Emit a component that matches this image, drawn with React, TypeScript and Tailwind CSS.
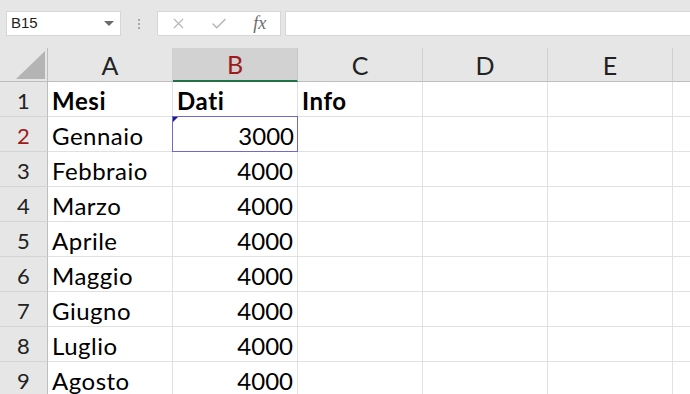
import { X, Check } from "lucide-react"

const cols = ["A", "B", "C", "D", "E"]

const rows: Array<[string, string, string]> = [
  ["Mesi", "Dati", "Info"],
  ["Gennaio", "3000", ""],
  ["Febbraio", "4000", ""],
  ["Marzo", "4000", ""],
  ["Aprile", "4000", ""],
  ["Maggio", "4000", ""],
  ["Giugno", "4000", ""],
  ["Luglio", "4000", ""],
  ["Agosto", "4000", ""],
]

const App = () => {
  return (
    <div className="w-[690px] h-[394px] overflow-hidden bg-white" style={{ fontFamily: "Lato, 'Noto Sans', sans-serif" }}>
      {/* formula bar */}
      <div className="h-[48px] bg-[#e6e6e6] flex items-start pt-[11px] pl-[6px]">
        <div className="w-[115px] h-[25px] bg-white border border-[#d6d6d6] flex items-center pl-[4px] pr-[6px] justify-between">
          <span className="text-[15px] text-[#222]" style={{ fontFamily: "'Liberation Sans', sans-serif" }}>B15</span>
          <svg width="10" height="6" viewBox="0 0 10 6">
            <polygon points="0,0 10,0 5,5" fill="#6b6b6b" />
          </svg>
        </div>
        <div className="w-[36px] h-[25px] flex flex-col items-center justify-center gap-[2px]">
          <div className="w-[2px] h-[2px] bg-[#a8a8a8]" />
          <div className="w-[2px] h-[2px] bg-[#a8a8a8]" />
          <div className="w-[2px] h-[2px] bg-[#a8a8a8]" />
        </div>
        <div className="w-[124px] h-[25px] bg-white border border-[#d6d6d6] flex items-center">
          <div className="w-[41px] flex justify-center">
            <X size={17} strokeWidth={1.5} color="#b5b5b5" />
          </div>
          <div className="w-[42px] flex justify-center">
            <Check size={18} strokeWidth={2} color="#b5b5b5" />
          </div>
          <div className="w-[41px] flex justify-center">
            <span className="italic text-[18px] text-[#6b6b6b]" style={{ fontFamily: "'Liberation Serif', serif" }}>fx</span>
          </div>
        </div>
        <div className="ml-[4px] flex-1 h-[25px] bg-white border border-[#d6d6d6] border-r-0" />
      </div>

      {/* sheet */}
      <div className="grid grid-cols-[48px_125px_125px_125px_125px_125px_1fr]">
        {/* corner */}
        <div className="h-[34px] bg-[#e6e6e6] border-r border-b border-[#bdbdbd] flex items-end justify-end pr-[2px] pb-[2px]">
          <svg width="29" height="28" viewBox="0 0 29 28">
            <polygon points="29,0 29,28 0,28" fill="#b4b4b4" />
          </svg>
        </div>
        {cols.map((c) => (
          <div
            key={c}
            className={
              c === "B"
                ? "h-[34px] bg-[#d2d2d2] border-r border-[#c6c6c6] border-b-2 border-b-[#217346] flex items-center justify-center text-[25px] text-[#9e1b1b] pt-[2px]"
                : "h-[34px] bg-[#e6e6e6] border-r border-[#d0d0d0] border-b border-b-[#bdbdbd] flex items-center justify-center text-[25px] text-[#222] pt-[2px]"
            }
          >
            {c}
          </div>
        ))}
        <div className="h-[34px] bg-[#e6e6e6] border-b border-[#bdbdbd]" />

        {rows.map((r, i) => {
          const n = i + 1
          const bold = i === 0
          return [
            <div
              key={`h${n}`}
              className={`h-[35px] bg-[#e6e6e6] border-r border-r-[#bdbdbd] border-b border-b-[#d4d4d4] flex items-center justify-center text-[22px] pt-[2px] ${n === 2 ? "text-[#9e1b1b]" : "text-[#222]"}`}
            >
              {n}
            </div>,
            <div
              key={`a${n}`}
              className={`h-[35px] border-r border-b border-[#e1e1e1] flex items-center pl-[4px] pt-[3px] text-[24px] text-black ${bold ? "font-bold tracking-[0.6px]" : "tracking-[0.5px]"}`}
            >
              {r[0]}
            </div>,
            <div
              key={`b${n}`}
              className={
                n === 2
                  ? "relative border border-[#7468cc] -ml-px -mt-px h-[36px] w-[126px] flex items-center justify-end pr-[3px] pt-[3px] text-[24px] text-black"
                  : `h-[35px] border-r border-b border-[#e1e1e1] flex items-center pt-[3px] text-[24px] text-black ${bold ? "font-bold pl-[4px] tracking-[0.6px]" : "justify-end pr-[4px]"}`
              }
            >
              {n === 2 && (
                <svg className="absolute left-0 top-0" width="5" height="5" viewBox="0 0 5 5">
                  <polygon points="0,0 5,0 0,5" fill="#1c1c8a" />
                </svg>
              )}
              {r[1]}
            </div>,
            <div
              key={`c${n}`}
              className={`h-[35px] border-r border-b border-[#e1e1e1] flex items-center pl-[4px] pt-[3px] text-[24px] text-black ${bold ? "font-bold tracking-[0.6px]" : ""}`}
            >
              {r[2]}
            </div>,
            <div key={`d${n}`} className="h-[35px] border-r border-b border-[#e1e1e1]" />,
            <div key={`e${n}`} className="h-[35px] border-r border-b border-[#e1e1e1]" />,
            <div key={`f${n}`} className="h-[35px] border-b border-[#e1e1e1]" />,
          ]
        })}
      </div>
    </div>
  )
}

export default App
